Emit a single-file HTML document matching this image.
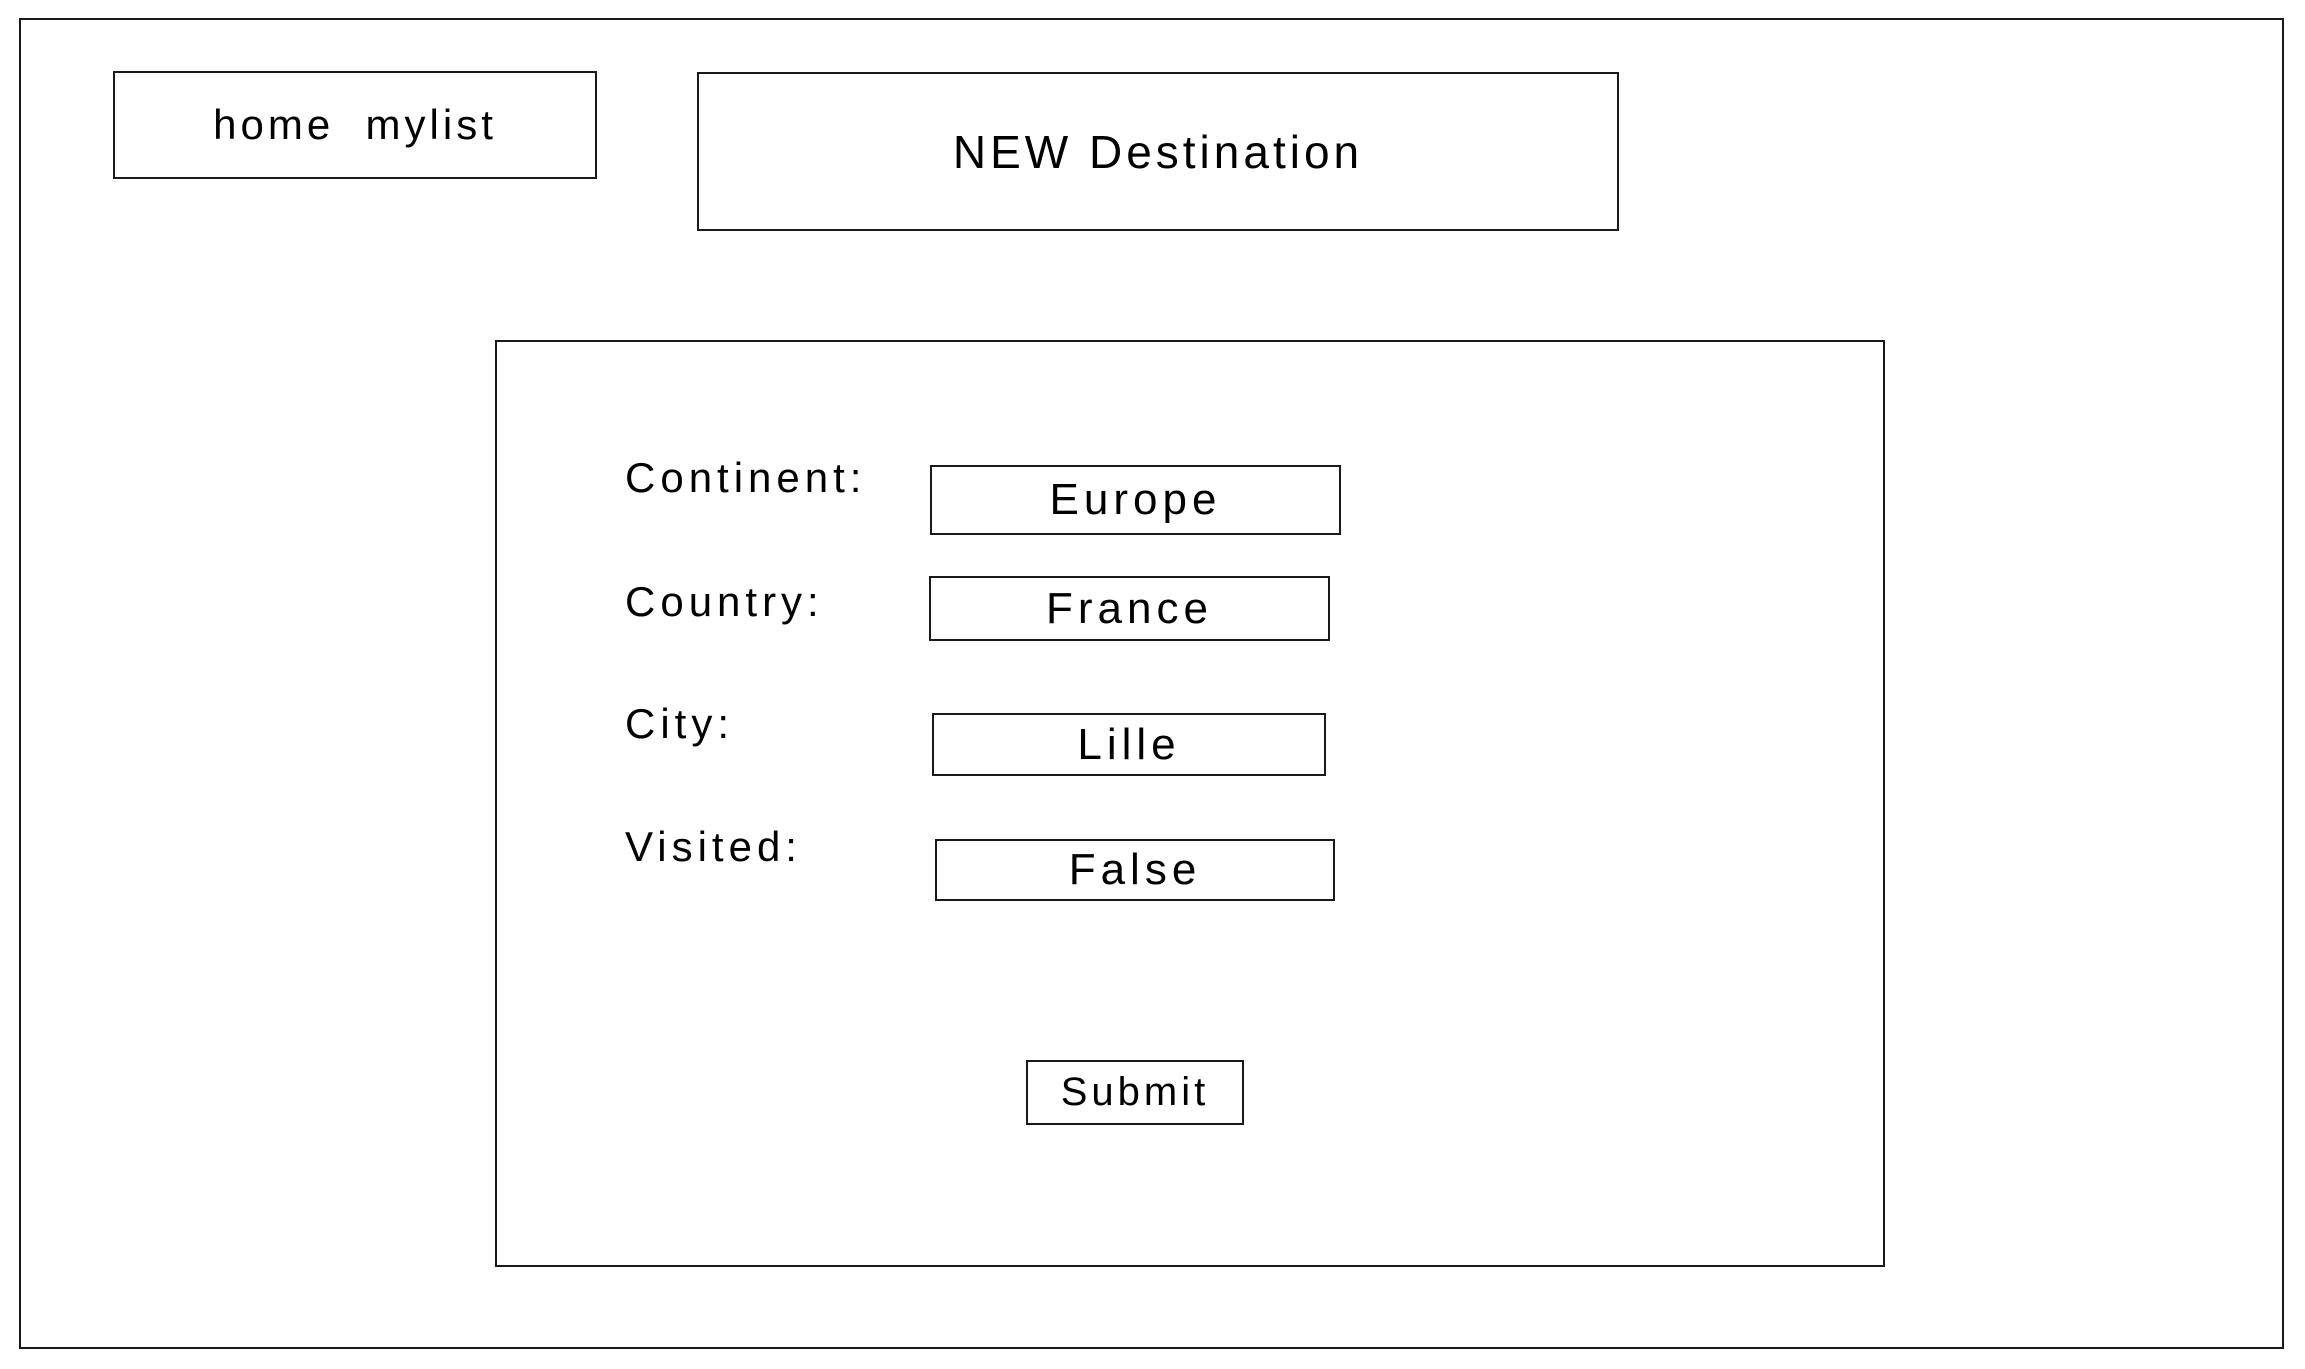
<!DOCTYPE html>
<html><head><meta charset="utf-8"><style>
html,body{margin:0;padding:0;background:#fff;}
body{width:2305px;height:1369px;position:relative;overflow:hidden;font-family:"Liberation Sans",sans-serif;color:#000;}
.b{position:absolute;border:2px solid #1a1a1a;box-sizing:border-box;}
.t{position:absolute;white-space:nowrap;}
.in{display:flex;align-items:center;justify-content:center;font-size:44px;letter-spacing:5px;}
.lbl{font-size:42px;letter-spacing:5px;}
</style></head><body>
<div class="b" style="left:19px;top:18px;width:2265px;height:1331px;"></div>
<div class="b in" style="left:113px;top:71px;width:484px;height:108px;font-size:42px;letter-spacing:4px;">home&nbsp;&nbsp;mylist</div>
<div class="b in" style="left:697px;top:72px;width:922px;height:159px;font-size:46px;letter-spacing:4px;">NEW Destination</div>
<div class="b" style="left:495px;top:340px;width:1390px;height:927px;"></div>
<div class="t lbl" style="left:625px;top:454px;">Continent:</div>
<div class="t lbl" style="left:625px;top:578px;">Country:</div>
<div class="t lbl" style="left:625px;top:700px;">City:</div>
<div class="t lbl" style="left:625px;top:823px;">Visited:</div>
<div class="b in" style="left:930px;top:465px;width:411px;height:70px;">Europe</div>
<div class="b in" style="left:929px;top:576px;width:401px;height:65px;">France</div>
<div class="b in" style="left:932px;top:713px;width:394px;height:63px;">Lille</div>
<div class="b in" style="left:935px;top:839px;width:400px;height:62px;">False</div>
<div class="b in" style="left:1026px;top:1060px;width:218px;height:65px;font-size:40px;letter-spacing:4px;">Submit</div>
</body></html>
